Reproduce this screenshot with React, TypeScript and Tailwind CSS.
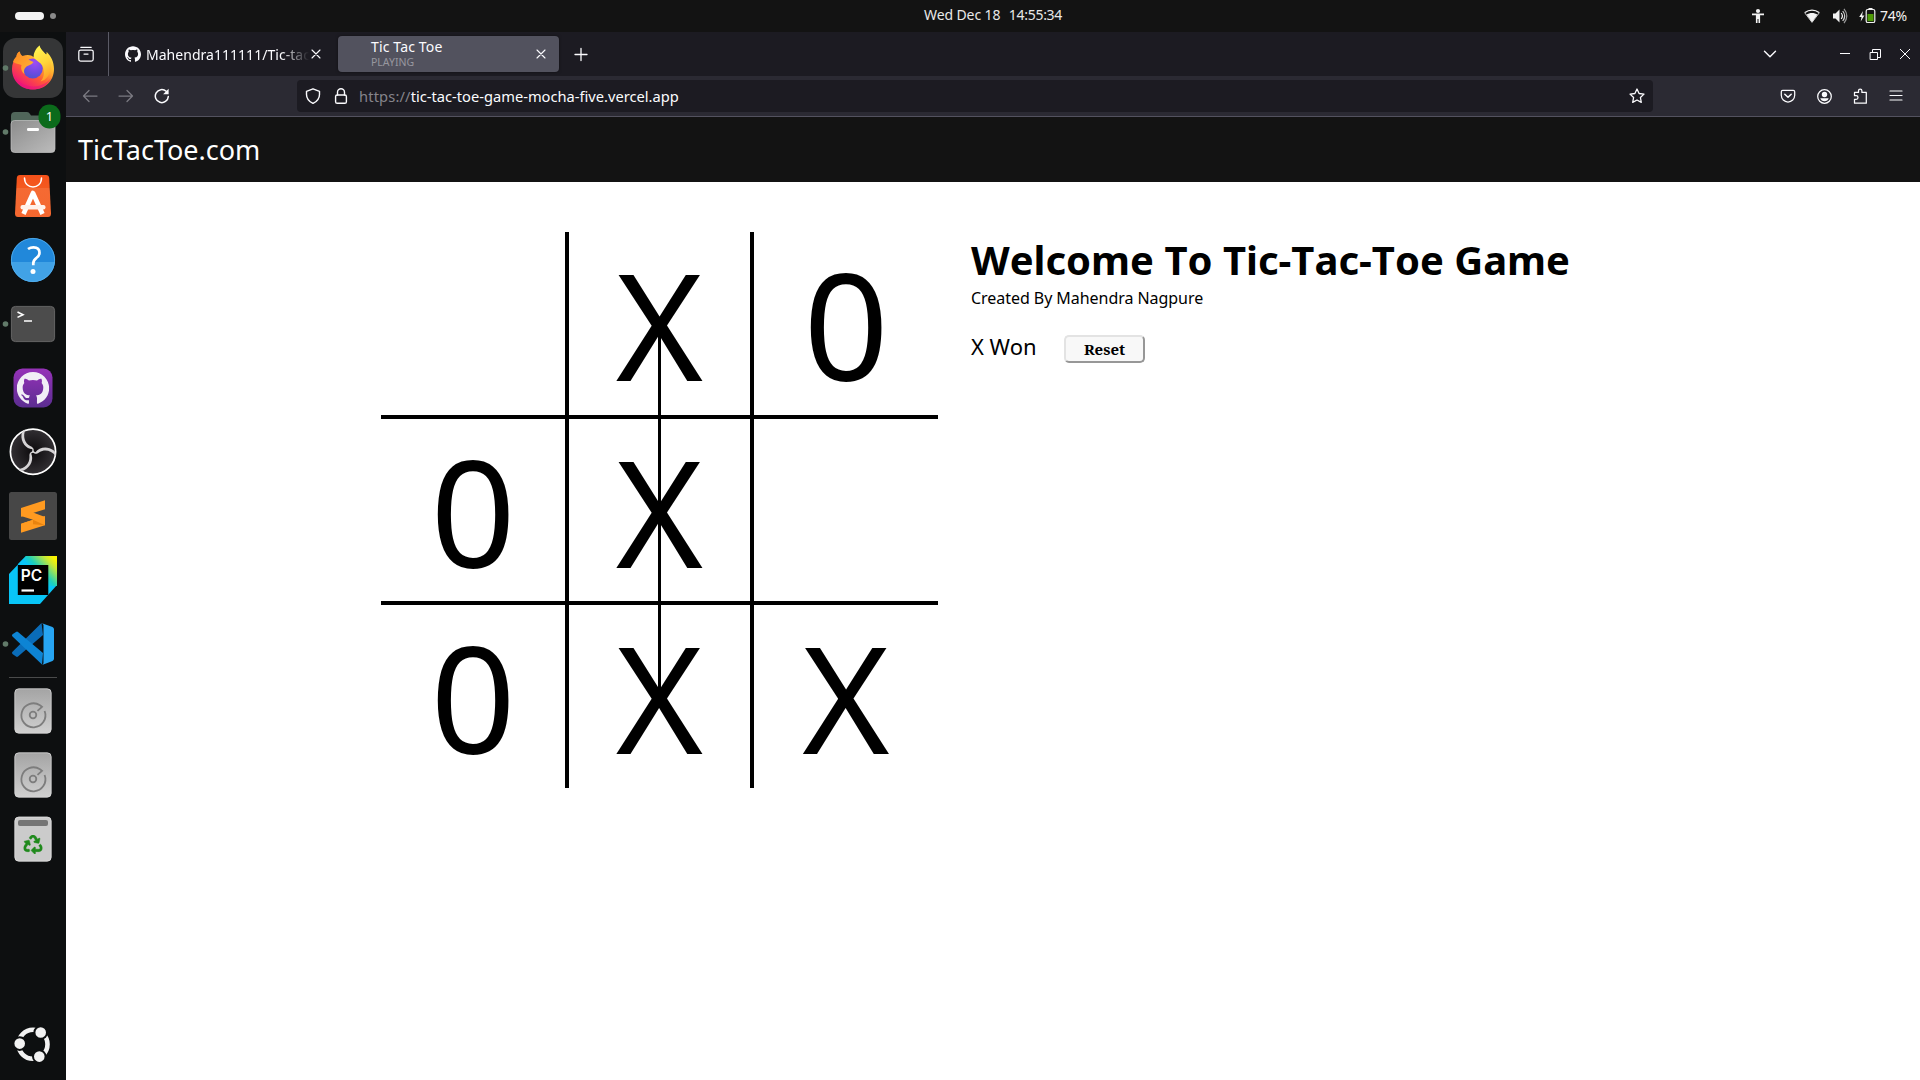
import React from "react";
import { SiGithub } from "react-icons/si";
import { FaRecycle } from "react-icons/fa";

type Mark = "X" | "0" | "";
const board: Mark[] = ["", "X", "0", "0", "X", "", "0", "X", "X"];

/* ---------- small toolbar icons, drawn on a 16px grid ---------- */
function Icon({ children, className = "" }: { children: React.ReactNode; className?: string }) {
  return (
    <svg
      viewBox="0 0 16 16"
      className={`h-4 w-4 shrink-0 ${className}`}
      fill="none"
      stroke="currentColor"
      strokeWidth="1.25"
      strokeLinecap="round"
      strokeLinejoin="round"
    >
      {children}
    </svg>
  );
}

function TopBar() {
  return (
    <header className="flex h-8 w-full shrink-0 items-center bg-[#131313] text-[14px] leading-none text-[#f2f2f2]">
      <div className="ml-[15px] h-2 w-[29px] rounded-full bg-[#f4f4f4]" />
      <div className="ml-1.5 h-1.5 w-1.5 rounded-full bg-[#8a8a8a]" />
      <div className="-mt-[3px] ml-[868px] flex w-[138px] items-center justify-between text-[#e8e8e8]">
        <span className="tracking-[-0.1px]">Wed Dec 18</span>
        <span className="tracking-[-0.3px]">14:55:34</span>
      </div>
      <div className="ml-auto flex items-center">
        <svg viewBox="0 0 16 16" className="h-4 w-4" fill="#f2f2f2">
          <circle cx="8" cy="3" r="2.1" />
          <path d="M2 5.600h12v1.600h-3.900V15H8.500v-4h-1v4H5.900V7.200H2z" />
        </svg>
        <svg viewBox="0 0 16 16" className="ml-[38px] h-4 w-4" fill="none">
          <path d="M1 4.600C5 1.400 11 1.400 15 4.600" stroke="#f2f2f2" strokeWidth="1.3" />
          <path d="M.5 4.500 8 14.400l7.500-9.900" stroke="#f2f2f2" strokeWidth=".8" />
          <path d="M2.500 6.600C5.600 4.400 10.400 4.400 13.500 6.600L8 14.300z" fill="#f2f2f2" />
        </svg>
        <svg viewBox="0 0 16 16" className="ml-3 h-4 w-4" fill="none" stroke="#f2f2f2" strokeWidth="1.2">
          <path d="M1 5.500h2.500L7.500 1.500v13L3.500 10.500H1z" fill="#f2f2f2" stroke="none" />
          <path d="M9.200 5q2.400 3 0 6" />
          <path d="M10.700 3q4 5 0 10" opacity=".85" />
          <path d="M12 .9q5.600 7 0 14.200" opacity=".6" />
        </svg>
        <svg viewBox="0 0 17 16" className="ml-[11px] h-4 w-[17px]" fill="none">
          <path d="M4 3 .2 9h2.300L1.700 13.500 5.400 7.500H3.100z" fill="#f2f2f2" />
          <path d="M9.500 0h4v2h-4z" fill="#f2f2f2" />
          <rect x="7.2" y="1.5" width="8.6" height="13" rx="1.6" stroke="#f2f2f2" strokeWidth="1.2" />
          <path d="M8.500 6h6v7.200h-6z" fill="#4e9a06" />
        </svg>
        <span className="ml-1 mr-[13px] tracking-[-0.2px]">74%</span>
      </div>
    </header>
  );
}

/* ---------- dock ---------- */
function DockItem({ children, running = false, selected = false }: { children: React.ReactNode; running?: boolean; selected?: boolean }) {
  return (
    <svg viewBox="0 0 66 64" className="h-16 w-[66px] shrink-0">
      {selected && <rect x="3" y="2" width="60" height="60" rx="13" fill="#353637" />}
      {running && <circle cx="5.5" cy="32" r="2.8" fill="#617a69" />}
      {children}
    </svg>
  );
}

function Firefox() {
  return (
    <DockItem running selected>
      <defs>
        <linearGradient id="fx-body" x1="0.85" y1="0.1" x2="0.25" y2="0.95">
          <stop offset="0" stopColor="#fff04a" />
          <stop offset=".35" stopColor="#ffb02e" />
          <stop offset=".62" stopColor="#ff5a36" />
          <stop offset="1" stopColor="#f0127a" />
        </linearGradient>
        <linearGradient id="fx-flame" x1="0.4" y1="0" x2="0.7" y2="1">
          <stop offset="0" stopColor="#fff44f" />
          <stop offset=".5" stopColor="#ffd53a" />
          <stop offset="1" stopColor="#ff9a26" />
        </linearGradient>
        <linearGradient id="fx-head" x1="0" y1="0" x2="1" y2="1">
          <stop offset="0" stopColor="#ff8a1e" />
          <stop offset="1" stopColor="#ffb43c" />
        </linearGradient>
        <radialGradient id="fx-globe" cx=".6" cy=".2" r=".9">
          <stop offset="0" stopColor="#a04bf5" />
          <stop offset=".6" stopColor="#6a4be0" />
          <stop offset="1" stopColor="#4a55c8" />
        </radialGradient>
      </defs>
      <path
        d="M39.500 9.500C40 13 43 15.500 46 18.500c.8-.5.700-1.700.500-2.700C51 20 54 26 54 33c0 12-9 20.500-21 20.500S12 45 12 33c0-5 1.500-8.500 4.500-12 0-2 .8-4.500 3.300-5.500.4 2 1.200 3.500 2.700 4.500 5-2 9-1 11 1z"
        fill="url(#fx-body)"
      />
      <circle cx="32.8" cy="32.5" r="10" fill="url(#fx-globe)" />
      <path
        d="M39.500 9.500C40 13 44 16 47 20c5 7 5 14 1.500 19.500-2.200 3.500-5.500 5.500-8 6C44 42 45 36 43 31c-1.500-4-5.500-5.500-8.500-8.500C32 19 36 12 39.500 9.500z"
        fill="url(#fx-flame)"
      />
      <path
        d="M13 26c1-3.500 3-5 3.500-5.500 0-2 1-4 3-5 .2 2 1 3.500 2.500 4.600 3-.6 5 .4 6 2.400 1.500 2.500 4 2.500 5.500 3.500-1 2.500-5 3-7.500 5-2 1.700-2.500 4-1.500 7-3-2-4-6-3-9-3-1.500-6-1-8.500-3z"
        fill="url(#fx-head)"
      />
      <path d="M14 39c6 13 27 16 37 3-4 8-11 11.500-18 11.500-9 0-16-5-19-14.500z" fill="#e6127f" opacity=".55" />
    </DockItem>
  );
}

function Files() {
  return (
    <DockItem running>
      <defs>
        <linearGradient id="files-front" x1="0" y1="0" x2="1" y2="1">
          <stop offset="0" stopColor="#8c8c8c" />
          <stop offset="1" stopColor="#bcbcbc" />
        </linearGradient>
      </defs>
      <path d="M11 16q0-4 4-4h12q2 0 3 2l1 1.500h20q4 0 4 4V36H11z" fill="#50665a" />
      <rect x="11" y="20.5" width="44" height="32" rx="3.5" fill="url(#files-front)" stroke="#c4c4c4" strokeWidth=".7" />
      <rect x="27" y="28" width="12" height="3" rx="1.2" fill="#fff" />
      <rect x="38.5" y="4.5" width="22" height="24" rx="11" fill="#0b6b1b" />
      <text x="49.5" y="21.3" fill="#fff" fontSize="13" textAnchor="middle" className="font-['Noto_Sans']">1</text>
    </DockItem>
  );
}

function Disk() {
  return (
    <DockItem>
      <defs>
        <linearGradient id="disk" x1="0" y1="0" x2="0" y2="1">
          <stop offset="0" stopColor="#a4a4a4" />
          <stop offset="1" stopColor="#d0d0d0" />
        </linearGradient>
      </defs>
      <rect x="14.8" y="9.8" width="36.4" height="44.4" rx="4" fill="url(#disk)" stroke="#d8d8d8" strokeWidth=".8" />
      <g fill="none" stroke="#7d7d7d" strokeWidth="1.8">
        <path d="M44.600 32a12 12 0 1 1-4.600-5.700l2 1.500-4.500 4" />
        <circle cx="33" cy="36" r="3.3" />
      </g>
    </DockItem>
  );
}

function Dock() {
  return (
    <nav className="flex w-[66px] shrink-0 flex-col bg-[#0d0f10] pt-1">
      <Firefox />
      <Files />
      <DockItem>
        <defs>
          <linearGradient id="store" x1="0" y1="0" x2="0" y2="1">
            <stop offset="0" stopColor="#f4511a" />
            <stop offset=".3" stopColor="#f4591f" />
            <stop offset=".31" stopColor="#f56a33" />
            <stop offset="1" stopColor="#f4672f" />
          </linearGradient>
        </defs>
        <path d="M20 11h26q3 0 3.200 3L51 49.500q0 3.500-3 3.500H18q-3 0-3-3.500L16.800 14q.2-3 3.200-3z" fill="url(#store)" />
        <path d="M24.500 14c0 12 17 12 17 0" fill="none" stroke="#fff" strokeWidth="1.5" strokeLinecap="round" />
        <path d="M23.500 50 33 29 42.500 50" fill="none" stroke="#fff" strokeWidth="4.6" strokeLinejoin="round" />
        <rect x="20.5" y="41" width="25" height="4.5" rx="2" fill="#fff1ea" />
      </DockItem>
      <DockItem>
        <circle cx="33" cy="32" r="22" fill="#2188da" />
        <path d="M11.100 34h43.800a22 22 0 0 1-43.800 0z" fill="#41a2e6" />
        <circle cx="33" cy="32" r="21.6" fill="none" stroke="#55b0ee" strokeWidth=".8" />
        <path d="M28 21q2.500-1.700 5.500-1.700 6 0 6 5.500 0 2.700-3 5-3.200 2.300-3.200 5.500v2" fill="none" stroke="#fff" strokeWidth="2.7" />
        <circle cx="33" cy="43.5" r="2.5" fill="#fff" />
      </DockItem>
      <DockItem running>
        <rect x="11.4" y="14.4" width="43.2" height="35.2" rx="4" fill="#4c4c4c" stroke="#6a6a6a" strokeWidth=".9" />
        <path d="m17.500 20 5.500 2.700-5.500 2.700" fill="none" stroke="#fff" strokeWidth="1.6" />
        <path d="M24 29h8" stroke="#fff" strokeWidth="1.5" />
      </DockItem>
      <DockItem>
        <defs>
          <linearGradient id="ghd" x1="0" y1="0" x2="0" y2="1">
            <stop offset="0" stopColor="#9632b8" />
            <stop offset="1" stopColor="#5b2d91" />
          </linearGradient>
        </defs>
        <rect x="13.5" y="12.5" width="39" height="39" rx="9" fill="url(#ghd)" />
        <SiGithub x="16.8" y="15.7" size={32.4} color="#f1eef6" />
      </DockItem>
      <DockItem>
        <defs>
          <radialGradient id="obs">
            <stop offset="0" stopColor="#0c0a0c" />
            <stop offset="1" stopColor="#322f33" />
          </radialGradient>
        </defs>
        <circle cx="33" cy="31.7" r="22.6" fill="url(#obs)" stroke="#fff" strokeWidth="1.7" />
        {[0, 120, 240].map((a) => (
          <path
            key={a}
            transform={`rotate(${a} 33 31.7)`}
            d="M33.700 32.500h-1.400v-3.300c-6-.5-11.800-6.500-10.800-15 .3-1.800 1.800-3.300 4-4.700-3 7-.8 13.500 4.700 16.500 2.300 1.200 3.300 2 3.500 3.500z"
            fill="#d5d3d5"
          />
        ))}
      </DockItem>
      <DockItem>
        <rect x="9" y="8" width="48" height="48" rx="2.5" fill="#474747" />
        <path d="m21 39.700 24-7.700v9.300L21 48.700z" fill="#ff9a20" />
        <path d="M21 24 45 16.200v9L21 32.700z" fill="#ff9a20" />
        <path d="M21 24v8l12 3.700L21 39.700l12 1.300 12-3.500V33l-12-4.500z" fill="#ff9a20" />
        <path d="m33 35.700 12 5.600-12-1z" fill="#e8830f" />
      </DockItem>
      <DockItem>
        <defs>
          <linearGradient id="pc" x1=".4" y1=".5" x2=".95" y2=".1">
            <stop offset="0" stopColor="#08c5f7" />
            <stop offset=".25" stopColor="#1fd0b8" />
            <stop offset=".75" stopColor="#c8ea35" />
            <stop offset="1" stopColor="#fcf500" />
          </linearGradient>
        </defs>
        <path d="M26 8h31v29L40 56H9V26z" fill="#08c5f7" />
        <path d="M26 8h31v30H22L18 16z" fill="url(#pc)" />
        <rect x="17.8" y="17" width="30.5" height="30" fill="#000" />
        <text x="20.8" y="33" fill="#fff" fontSize="15.5" fontWeight="600" className="font-['Inter']">PC</text>
        <path d="M21.500 42.500h12.500" stroke="#fff" strokeWidth="2.2" />
      </DockItem>
      <DockItem running>
        <path d="M12.500 42q-1.200-1.200 0-2.300L41.500 11 43 23 18 44.500q-1 .8-2 0z" fill="#0a6cb8" />
        <path d="M12.500 22.200q-1.200 1.200 0 2.300L42 52.500 43 41 18 20q-1-.8-2 0z" fill="#0d84d4" />
        <path d="M42 11.200 52.500 15q1.500.7 1.500 2.300v29.400q0 1.600-1.500 2.300L42 53q1.500-.7 1.500-2.300V13.300Q43.500 12 42 11.200z" fill="#27a5f2" />
      </DockItem>
      <div className="mx-[9px] my-px h-px bg-[#4a4b4b]" />
      <Disk />
      <Disk />
      <DockItem>
        <rect x="14.8" y="10" width="36.4" height="44.2" rx="4" fill="#cbcbcb" stroke="#e2e2e2" strokeWidth=".8" />
        <rect x="18" y="13" width="30" height="6" rx="2" fill="#757575" />
        <FaRecycle x="23.5" y="28" size={19} color="#1f8a1c" stroke="#1f8a1c" strokeWidth="14" />
      </DockItem>
      <svg viewBox="0 0 66 72" className="mt-auto h-[72px] w-[66px] shrink-0" fill="none">
        <circle cx="33" cy="36.3" r="14.5" stroke="#f2f2f2" strokeWidth="4.6" />
        <g fill="#f2f2f2" stroke="#0d0f10" strokeWidth="2">
          <circle cx="40.7" cy="24.5" r="6.3" />
          <circle cx="19.7" cy="35.6" r="6.3" />
          <circle cx="39.3" cy="48.6" r="6.3" />
        </g>
      </svg>
    </nav>
  );
}

/* ---------- browser chrome ---------- */
function TabStrip() {
  return (
    <div className="flex h-11 items-center bg-[#1c1b22] text-[14px] text-[#fbfbfe]">
      <Icon className="ml-3">
        <path d="M2.800 1.300h10.400" />
        <rect x=".8" y="4" width="14.4" height="11" rx="1.8" />
        <path d="M6 8h4" />
      </Icon>
      <div className="ml-3.5 h-full w-px bg-[#5b5b66]" />
      <SiGithub size={16} className="ml-4 shrink-0" />
      <div className="ml-[5px] w-[164px] whitespace-nowrap tracking-[0.03px] [mask-image:linear-gradient(to_right,black_135px,transparent_163px)]">
        Mahendra111111/Tic-tac
      </div>
      <Icon>
        <path d="m2 4 8 8m0-8-8 8" strokeWidth="1.1" />
      </Icon>
      <div className="ml-3 flex h-9 w-[221px] items-center rounded bg-[#52525e] shadow-[0_0_3px_rgba(0,0,0,0.5)]">
        <div className="-mt-[3px] ml-[33px] flex flex-col">
          <span className="text-[14px] leading-[18px] tracking-[0.15px]">Tic Tac Toe</span>
          <span className="text-[10.5px] leading-[12px] text-[#97979e]">PLAYING</span>
        </div>
        <Icon className="ml-auto mr-2.5">
          <path d="m4 4 8 8m0-8-8 8" strokeWidth="1.1" />
        </Icon>
      </div>
      <Icon className="ml-3.5">
        <path d="M8 2.500v12M2 8.500h12" strokeWidth="1.3" />
      </Icon>
      <Icon className="ml-auto mr-[59px]">
        <path d="m2.500 5.200 5.500 5.600 5.500-5.600" strokeWidth="1.4" />
      </Icon>
      <Icon>
        <path d="M3 7.500h10" strokeWidth="1" strokeLinecap="butt" />
      </Icon>
      <Icon className="ml-3.5">
        <path d="M3.500 6.500h7v7h-7zM5.500 6.500v-3h8v8h-3" strokeWidth="1" strokeLinejoin="miter" />
      </Icon>
      <Icon className="ml-3.5 mr-[7px]">
        <path d="m3 3 10 10m0-10-10 10" strokeWidth="1" strokeLinecap="butt" />
      </Icon>
    </div>
  );
}

function Toolbar() {
  return (
    <div className="flex h-[41px] items-center border-b border-[#53525f] bg-[#2b2a33] text-[#fbfbfe]">
      <Icon className="ml-4 text-[#7b7a82]">
        <path d="M15 8H1.500m5.500-5.500L1.500 8 7 13.500" />
      </Icon>
      <Icon className="ml-5 text-[#7b7a82]">
        <path d="M1 8h13.500M9 2.500 14.500 8 9 13.500" />
      </Icon>
      <Icon className="ml-5">
        <path d="M14.300 8.600A6.500 6.500 0 1 1 12.200 3.300" strokeWidth="1.5" />
        <path d="M14.600.8v5.500H9.100z" fill="currentColor" stroke="none" />
      </Icon>
      <div className="ml-[127px] flex h-8 w-[1356px] items-center rounded bg-[#1c1b22]">
        <Icon className="ml-2">
          <path d="M8 .8 14.500 3.300v3.200c0 4-2.500 7-6.500 8.900-4-1.900-6.500-4.900-6.500-8.900V3.300z" strokeWidth="1.4" />
        </Icon>
        <Icon className="ml-3">
          <rect x="2.6" y="7" width="10.8" height="8.3" rx="1.6" strokeWidth="1.4" />
          <path d="M4.500 7V4.300a3.500 3.500 0 0 1 7 0V7" strokeWidth="1.4" />
        </Icon>
        <span className="ml-2.5 text-[14.67px] leading-[18px] text-[#85848b]">
          <span className="tracking-[0.15px]">https://</span>
          <span className="text-[#fbfbfe]">tic-tac-toe-game-mocha-five.vercel.app</span>
        </span>
        <Icon className="ml-auto mr-2">
          <path d="m8 1 2.100 4.500 4.900.6-3.600 3.400.9 4.900L8 12l-4.300 2.400.9-4.900L1 6.100l4.900-.6z" strokeWidth="1.3" />
        </Icon>
      </div>
      <Icon className="ml-auto">
        <path d="M2.700 2.300h10.600q1.400 0 1.400 1.400v3.600a6.700 6.700 0 0 1-13.400 0V3.700q0-1.400 1.400-1.400z" />
        <path d="M4.800 6.300 8 9.300l3.200-3" strokeWidth="1.5" />
      </Icon>
      <Icon className="ml-5">
        <circle cx="8.5" cy="8.5" r="6.8" />
        <circle cx="8.5" cy="6.5" r="2.7" fill="currentColor" stroke="none" />
        <path d="M4.300 10.300h8.400c-.6 2-2.200 3-4.200 3s-3.600-1-4.200-3z" fill="currentColor" stroke="none" />
      </Icon>
      <Icon className="ml-5">
        <path d="M2.500 15.200V11.300h1.700a1.800 1.800 0 0 0 0-3.600H2.500V4.400h4V2.800a1.700 1.700 0 0 1 3.400 0v1.600h4.400v10.800z" />
      </Icon>
      <Icon className="ml-5 mr-4">
        <path d="M2 3h12M2 7.500h12M2 12h12" strokeWidth="1.2" />
      </Icon>
    </div>
  );
}

/* ---------- game page ---------- */
function Board() {
  return (
    <div className="relative ml-[315px] mt-[50px] grid h-[556px] w-[557px] shrink-0 grid-cols-[188px_185px_184px] grid-rows-[187px_186px_183px] text-[149px] leading-[183px] text-black">
      {board.map((mark, i) => (
        <div
          key={i}
          className={`border-black text-center ${i % 3 < 2 ? "border-r-4" : ""} ${i < 6 ? "border-b-4" : ""}`}
        >
          {mark}
        </div>
      ))}
      <div className="absolute left-[277px] top-[93px] h-[374px] w-[3px] bg-black" />
    </div>
  );
}

function Page() {
  return (
    <main className="flex flex-1 flex-col bg-white text-black">
      <div className="flex h-[65px] shrink-0 items-center bg-[#131313] pl-3 pt-0.5 text-[27px] text-white">
        TicTacToe.com
      </div>
      <div className="flex flex-1">
        <Board />
        <section className="ml-[33px] mt-[50px] flex flex-col items-start whitespace-nowrap">
          <h1 className="text-[40px] font-bold leading-[56px] [font-kerning:none]">Welcome To Tic-Tac-Toe Game</h1>
          <p className="text-[16px] leading-5 tracking-[-0.05px]">Created By Mahendra Nagpure</p>
          <div className="mt-[27px] flex items-start">
            <span className="w-[93px] text-[22px] leading-[23px]">X Won</span>
            <button className="flex h-7 w-[81px] items-center justify-center rounded-[5px] border-2 border-b-[#979797] border-l-[#e3e3e3] border-r-[#979797] border-t-[#e3e3e3] bg-[#f8f8f8] font-['Noto_Serif',serif] text-[15px] font-bold leading-none">
              Reset
            </button>
          </div>
        </section>
      </div>
    </main>
  );
}

export default function App() {
  return (
    <div className="flex h-[1080px] w-[1920px] flex-col overflow-hidden bg-black font-['Noto_Sans',sans-serif]">
      <TopBar />
      <div className="flex flex-1">
        <Dock />
        <div className="flex flex-1 flex-col">
          <TabStrip />
          <Toolbar />
          <Page />
        </div>
      </div>
    </div>
  );
}
